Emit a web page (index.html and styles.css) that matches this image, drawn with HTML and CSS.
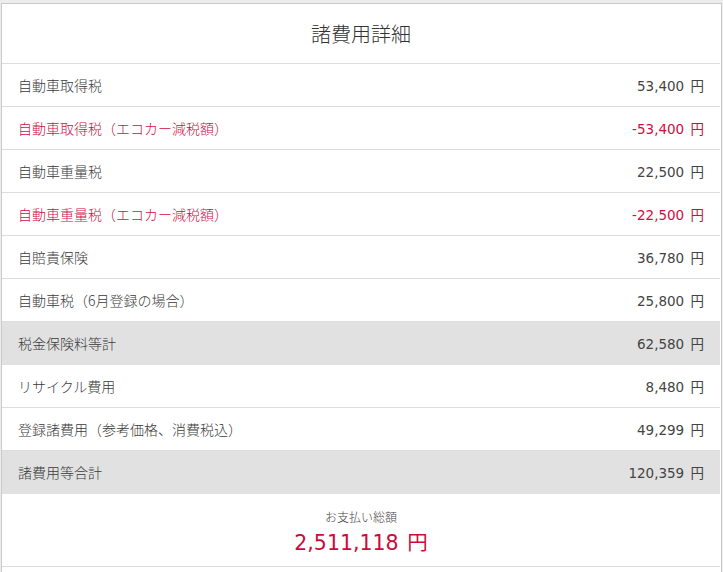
FILE: index.html
```html
<!DOCTYPE html>
<html lang="ja">
<head>
<meta charset="utf-8">
<title>諸費用詳細</title>
<link rel="stylesheet" href="styles.css">
</head>
<body>
<div class="panel">
  <div class="panel-title">諸費用詳細</div>
  <div class="rows">
    <div class="row"><span class="label">自動車取得税</span><span class="value">53,400 円</span></div>
    <div class="row row-red"><span class="label">自動車取得税（エコカー減税額）</span><span class="value">-53,400 円</span></div>
    <div class="row"><span class="label">自動車重量税</span><span class="value">22,500 円</span></div>
    <div class="row row-red"><span class="label">自動車重量税（エコカー減税額）</span><span class="value">-22,500 円</span></div>
    <div class="row"><span class="label">自賠責保険</span><span class="value">36,780 円</span></div>
    <div class="row"><span class="label">自動車税（6月登録の場合）</span><span class="value">25,800 円</span></div>
    <div class="row row-sub"><span class="label">税金保険料等計</span><span class="value">62,580 円</span></div>
    <div class="row"><span class="label">リサイクル費用</span><span class="value">8,480 円</span></div>
    <div class="row"><span class="label">登録諸費用（参考価格、消費税込）</span><span class="value">49,299 円</span></div>
    <div class="row row-sub"><span class="label">諸費用等合計</span><span class="value">120,359 円</span></div>
  </div>
  <div class="total">
    <div class="total-label">お支払い総額</div>
    <div class="total-amount">2,511,118 円</div>
  </div>
</div>
</body>
</html>
```

FILE: styles.css
```css
html, body {
  margin: 0;
  background: #ededed;
}
body {
  padding: 3px 0 0 1px;
  font-family: "DejaVu Sans", "Noto Sans CJK JP", sans-serif;
  color: #333;
  overflow: hidden;
}
.panel {
  width: 718px;
  height: 569px;
  background: #fff;
  border: 1px solid #c9c9c9;
  border-bottom: none;
  padding-right: 1px;
}
.panel-title {
  height: 59px;
  display: flex;
  align-items: center;
  justify-content: center;
  font-family: "Noto Sans CJK JP", sans-serif;
  font-weight: 300;
  font-size: 20px;
  color: #333;
  border-bottom: 1px solid #dcdcdc;
}
.row {
  height: 42px;
  display: flex;
  align-items: center;
  justify-content: space-between;
  padding: 0 16px 0 16px;
  font-size: 14px;
  border-bottom: 1px solid #dcdcdc;
  color: #3a3a3a;
}
.label {
  font-family: "Noto Sans CJK JP", sans-serif;
  font-weight: 300;
}
.value {
  font-family: "DejaVu Sans", "Noto Sans CJK JP", sans-serif;
  font-size: 13.5px;
  word-spacing: 2px;
  color: #444;
}
.row-red,
.row-red .value {
  color: #d10c3f;
}
.row-sub {
  background: #e1e1e1;
  border-bottom-color: #e1e1e1;
}
.total {
  height: 73px;
  border-bottom: 1px solid #dcdcdc;
  display: flex;
  flex-direction: column;
  align-items: center;
  box-sizing: border-box;
}
.total-label {
  margin-top: 15px;
  font-family: "Noto Sans CJK JP", sans-serif;
  font-weight: 300;
  font-size: 12px;
  line-height: 16px;
  color: #444;
}
.total-amount {
  margin-top: 5px;
  font-size: 20.5px;
  line-height: 26px;
  word-spacing: 2px;
  color: #cc0a3a;
}
```
